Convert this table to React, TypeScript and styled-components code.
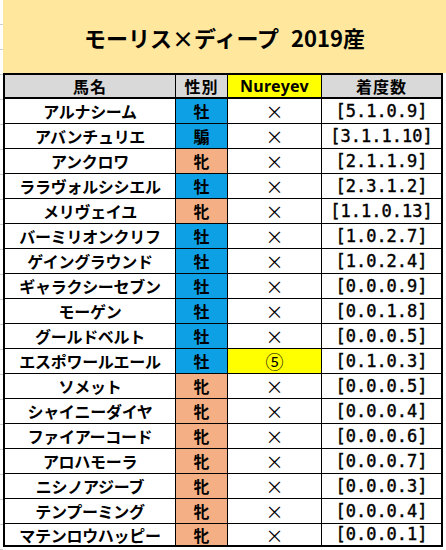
import React from "react";
import styled, { createGlobalStyle } from "styled-components";

type Sex = "牡" | "牝" | "騸";

type Horse = {
  name: string;
  sex: Sex;
  nureyev: string;
  record: string;
};

const horses: Horse[] = [
  { name: "アルナシーム", sex: "牡", nureyev: "×", record: "[5.1.0.9]" },
  { name: "アバンチュリエ", sex: "騸", nureyev: "×", record: "[3.1.1.10]" },
  { name: "アンクロワ", sex: "牝", nureyev: "×", record: "[2.1.1.9]" },
  { name: "ララヴォルシシエル", sex: "牡", nureyev: "×", record: "[2.3.1.2]" },
  { name: "メリヴェイユ", sex: "牝", nureyev: "×", record: "[1.1.0.13]" },
  { name: "バーミリオンクリフ", sex: "牡", nureyev: "×", record: "[1.0.2.7]" },
  { name: "ゲイングラウンド", sex: "牡", nureyev: "×", record: "[1.0.2.4]" },
  { name: "ギャラクシーセブン", sex: "牡", nureyev: "×", record: "[0.0.0.9]" },
  { name: "モーゲン", sex: "牡", nureyev: "×", record: "[0.0.1.8]" },
  { name: "グールドベルト", sex: "牡", nureyev: "×", record: "[0.0.0.5]" },
  { name: "エスポワールエール", sex: "牡", nureyev: "⑤", record: "[0.1.0.3]" },
  { name: "ソメット", sex: "牝", nureyev: "×", record: "[0.0.0.5]" },
  { name: "シャイニーダイヤ", sex: "牝", nureyev: "×", record: "[0.0.0.4]" },
  { name: "ファイアーコード", sex: "牝", nureyev: "×", record: "[0.0.0.6]" },
  { name: "アロハモーラ", sex: "牝", nureyev: "×", record: "[0.0.0.7]" },
  { name: "ニシノアジーブ", sex: "牝", nureyev: "×", record: "[0.0.0.3]" },
  { name: "テンプーミング", sex: "牝", nureyev: "×", record: "[0.0.0.4]" },
  { name: "マテンロウハッピー", sex: "牝", nureyev: "×", record: "[0.0.0.1]" },
];

const sexColor: Record<Sex, string> = {
  牡: "#0ea0e4",
  騸: "#0ea0e4",
  牝: "#f4b084",
};

const App = () => {
  return (
    <Page>
      <GlobalStyle />
      <Gutter />
      <Sheet>
        <Title>
          モーリス×ディープ<Gap />2019産
        </Title>
        <Table>
          <HeadCell>馬名</HeadCell>
          <HeadCell>性別</HeadCell>
          <HeadCell $bg="#ffff00" $latin>
            Nureyev
          </HeadCell>
          <HeadCell $last>着度数</HeadCell>
          {horses.map((h, i) => {
            const isLast = i === horses.length - 1;
            const hit = h.nureyev !== "×";
            return (
              <React.Fragment key={h.name}>
                <NameCell $end={isLast}>{h.name}</NameCell>
                <SexCell $end={isLast} $bg={sexColor[h.sex]}>
                  {h.sex}
                </SexCell>
                <MarkCell $end={isLast} $bg={hit ? "#ffff00" : "#fff"}>
                  {h.nureyev}
                </MarkCell>
                <RecordCell $end={isLast} $last>
                  {h.record}
                </RecordCell>
              </React.Fragment>
            );
          })}
        </Table>
      </Sheet>
    </Page>
  );
};

export default App;

const GlobalStyle = createGlobalStyle`
  html, body {
    margin: 0;
    padding: 0;
    background: #fff;
  }
  body {
    font-family: "Noto Sans CJK JP", "Noto Sans", sans-serif;
    color: #000;
  }
`;

const Page = styled.div`
  display: flex;
  width: 446px;
  height: 550px;
  overflow: hidden;
`;

const Gutter = styled.div`
  width: 3px;
  flex-shrink: 0;
  background: repeating-linear-gradient(
    to bottom,
    transparent 0px,
    transparent 24px,
    #cfcfcf 24px,
    #cfcfcf 25px
  );
`;

const Sheet = styled.div`
  flex: 1;
  display: flex;
  flex-direction: column;
`;

const Title = styled.div`
  height: 73px;
  background: #ffe79e;
  display: flex;
  align-items: center;
  justify-content: center;
  font-size: 22px;
  font-weight: 700;
`;

const Gap = styled.span`
  display: inline-block;
  width: 12px;
`;

const Table = styled.div`
  width: 440px;
  box-sizing: border-box;
  border: 2px solid #000;
  display: grid;
  grid-template-columns: 171px 52px 94px 119px;
  grid-template-rows: 24px repeat(17, 25px) 21px;
`;

const Cell = styled.div<{ $bg?: string; $last?: boolean; $end?: boolean }>`
  box-sizing: border-box;
  display: flex;
  align-items: center;
  justify-content: center;
  line-height: 1;
  background: ${({ $bg }) => $bg || "#fff"};
  border-right: ${({ $last }) => ($last ? "none" : "1px solid #000")};
  border-bottom: ${({ $end }) => ($end ? "none" : "1px solid #000")};
  white-space: nowrap;
`;

const HeadCell = styled(Cell)<{ $latin?: boolean }>`
  background: ${({ $bg }) => $bg || "#d9d9d9"};
  border-bottom: 2px solid #000;
  font-size: 16px;
  font-weight: 700;
  font-family: ${({ $latin }) =>
    $latin
      ? '"Noto Sans", "Noto Sans CJK JP", sans-serif'
      : '"Noto Sans CJK JP", sans-serif'};
  letter-spacing: ${({ $latin }) => ($latin ? "0.3px" : "1px")};
`;

const NameCell = styled(Cell)`
  font-size: 16px;
  font-weight: 700;
  letter-spacing: -0.3px;
`;

const SexCell = styled(Cell)`
  font-size: 16px;
  font-weight: 700;
`;

const MarkCell = styled(Cell)`
  font-size: 18px;
  font-weight: 400;
`;

const RecordCell = styled(Cell)`
  font-family: "DejaVu Sans Mono", "Liberation Mono", monospace;
  font-size: 17px;
  font-weight: 400;
  -webkit-text-stroke: 0.4px #000;
`;
